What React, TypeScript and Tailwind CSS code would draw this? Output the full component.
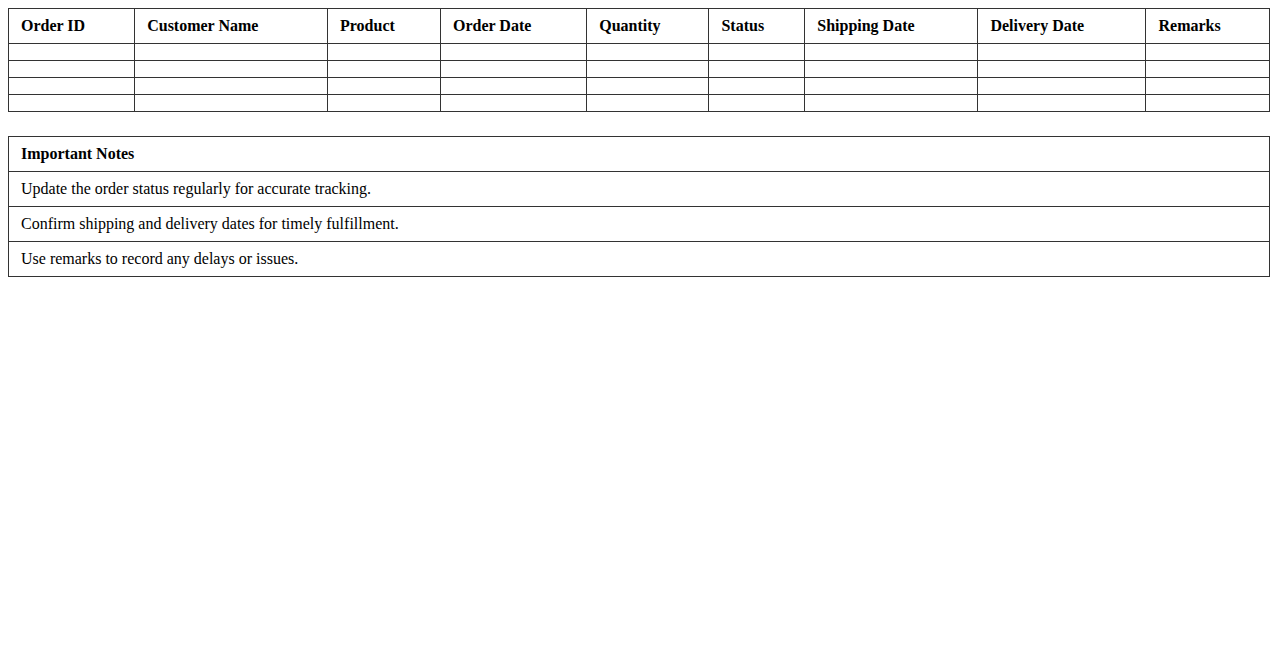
const columns = [
  "Order ID",
  "Customer Name",
  "Product",
  "Order Date",
  "Quantity",
  "Status",
  "Shipping Date",
  "Delivery Date",
  "Remarks",
];

const notes = [
  "Update the order status regularly for accurate tracking.",
  "Confirm shipping and delivery dates for timely fulfillment.",
  "Use remarks to record any delays or issues.",
];

export default function App() {
  return (
    <div className="min-h-screen bg-white p-2 font-['Liberation_Serif','Times_New_Roman',serif] text-base leading-[18px] text-black">
      <table className="mb-6 w-full border-collapse">
        <thead>
          <tr>
            {columns.map((c) => (
              <th key={c} className="border border-[#333] px-3 py-2 text-left font-bold">
                {c}
              </th>
            ))}
          </tr>
        </thead>
        <tbody>
          {[0, 1, 2, 3].map((r) => (
            <tr key={r}>
              {columns.map((c) => (
                <td key={c} className="h-[17px] border border-[#333] px-3 py-2"></td>
              ))}
            </tr>
          ))}
        </tbody>
      </table>

      <table className="w-full border-collapse">
        <thead>
          <tr>
            <th className="border border-[#333] px-3 py-2 text-left font-bold">Important Notes</th>
          </tr>
        </thead>
        <tbody>
          {notes.map((n) => (
            <tr key={n}>
              <td className="border border-[#333] px-3 py-2">{n}</td>
            </tr>
          ))}
        </tbody>
      </table>
    </div>
  );
}
